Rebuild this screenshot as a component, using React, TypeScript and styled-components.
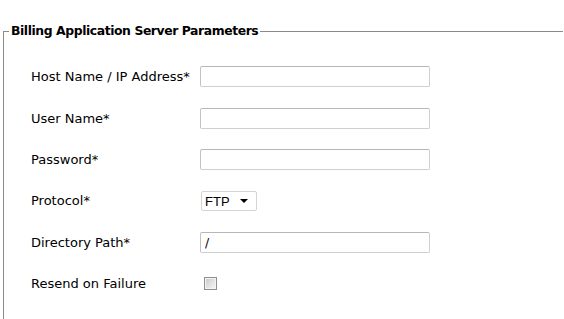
import styled, { createGlobalStyle } from 'styled-components';

const GlobalStyle = createGlobalStyle`
  html, body {
    margin: 0;
    padding: 0;
    background: #ffffff;
  }
  body {
    font-family: "DejaVu Sans", Verdana, sans-serif;
    color: #000;
  }
`;

const Page = styled.div`
  padding: 23px 1px 0 3px;
`;

const Group = styled.fieldset`
  margin: 0;
  padding: 0 0 20px 0;
  border: 1px solid #8a8a8a;
  border-right: none;
  border-bottom: none;
  min-width: 0;
`;

const Legend = styled.legend`
  margin-left: 5px;
  padding: 0 2px;
  font-size: 12.4px;
  font-weight: bold;
  line-height: 16px;
  letter-spacing: -0.42px;
`;

const Form = styled.div`
  display: grid;
  grid-template-columns: 169px 230px;
  grid-auto-rows: 41.4px;
  align-items: center;
  padding: 17px 0 0 27px;
`;

const Label = styled.label`
  font-size: 13px;
  white-space: nowrap;
`;

const TextBox = styled.input`
  box-sizing: border-box;
  width: 230px;
  height: 21px;
  margin: 0;
  padding: 0 4px;
  border: 1px solid #cfcfcf;
  border-top-color: #b7b7b7;
  border-left-color: #c2c2c2;
  border-radius: 2px;
  font-family: "DejaVu Sans", Verdana, sans-serif;
  font-size: 12.4px;
  color: #000;
  outline: none;
`;

const SelectWrap = styled.div`
  position: relative;
  width: 56px;
  height: 20px;
  margin-left: 1px;
`;

const Select = styled.select`
  appearance: none;
  box-sizing: border-box;
  width: 56px;
  height: 20px;
  margin: 0;
  padding: 0 0 0 3px;
  border: 1px solid #d4d4d4;
  border-radius: 2px;
  background: #fff;
  font-family: "Liberation Sans", Arial, sans-serif;
  font-size: 13px;
  color: #000;
  outline: none;
`;

const Caret = styled.span`
  position: absolute;
  right: 9px;
  top: 8px;
  width: 0;
  height: 0;
  border-left: 4px solid transparent;
  border-right: 4px solid transparent;
  border-top: 4px solid #000;
  pointer-events: none;
`;

const Check = styled.input`
  appearance: none;
  box-sizing: border-box;
  width: 13px;
  height: 13px;
  margin: 0 0 0 4px;
  border: 1px solid #8f8f8f;
  background: linear-gradient(135deg, #c8c8c8 0%, #e6e6e6 60%, #f6f6f6 100%);
  box-shadow: inset 0 0 0 1px #f4f4f4;
`;

export default function App() {
  return (
    <>
      <GlobalStyle />
      <Page>
        <Group>
          <Legend>Billing Application Server Parameters</Legend>
          <Form>
            <Label>Host Name / IP Address*</Label>
            <TextBox type="text" defaultValue="" />
            <Label>User Name*</Label>
            <TextBox type="text" defaultValue="" />
            <Label>Password*</Label>
            <TextBox type="password" defaultValue="" />
            <Label>Protocol*</Label>
            <SelectWrap>
              <Select defaultValue="FTP">
                <option>FTP</option>
                <option>SFTP</option>
              </Select>
              <Caret />
            </SelectWrap>
            <Label>Directory Path*</Label>
            <TextBox type="text" defaultValue="/" />
            <Label>Resend on Failure</Label>
            <Check type="checkbox" />
          </Form>
        </Group>
      </Page>
    </>
  );
}
